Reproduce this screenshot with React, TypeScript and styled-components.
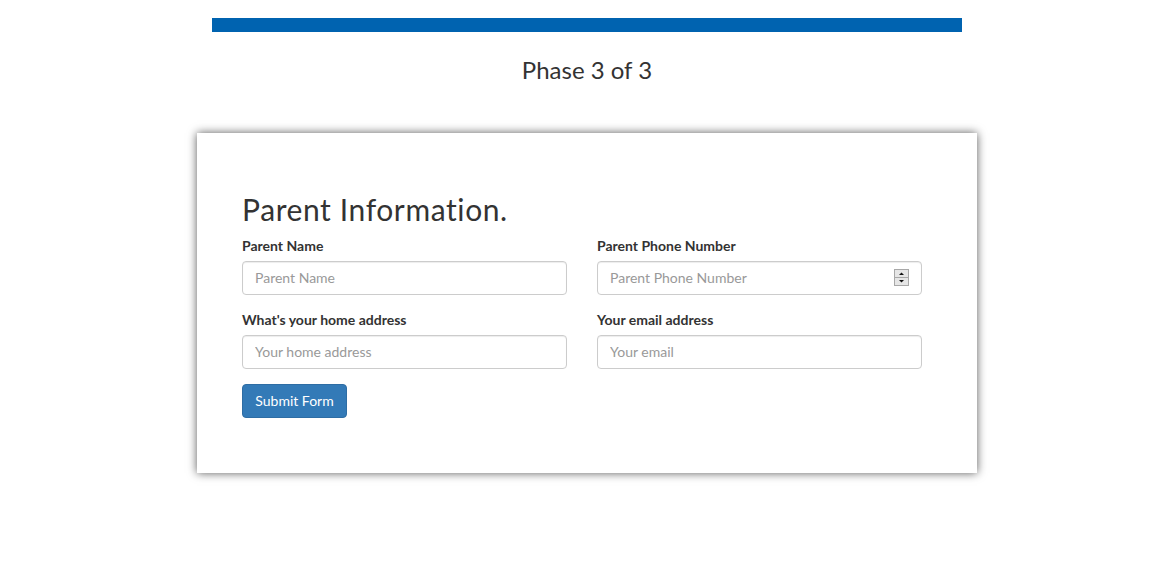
import React from "react";
import styled, { createGlobalStyle } from "styled-components";

const Global = createGlobalStyle`
  html, body { margin: 0; padding: 0; background: #fff; }
  body { font-family: "Lato", "DejaVu Sans", sans-serif; color: #333; }
  * { box-sizing: border-box; }
`;

const Page = styled.div`
  display: flex;
  flex-direction: column;
  align-items: center;
  padding: 18px 0 99px 6px;
`;

const ProgressBar = styled.div`
  width: 750px;
  height: 14px;
  background: #0063b0;
`;

const Phase = styled.h4`
  margin: 23px 0 0;
  font-size: 24px;
  line-height: 30px;
  font-weight: 400;
  color: #333;
`;

const Card = styled.div`
  margin-top: 48px;
  width: 780px;
  height: 340px;
  background: #fff;
  box-shadow: 0 0 9px rgba(0, 0, 0, 0.65);
  padding: 56px 55px 0 45px;
`;

const Title = styled.h2`
  margin: 0 0 7px;
  font-size: 30px;
  line-height: 40px;
  font-weight: 400;
  letter-spacing: 0.6px;
  color: #333;
`;

const Grid = styled.div`
  display: grid;
  grid-template-columns: 325px 325px;
  column-gap: 30px;
  row-gap: 15px;
`;

const Field = styled.div`
  display: flex;
  flex-direction: column;
`;

const Label = styled.label`
  font-size: 14px;
  font-weight: 700;
  line-height: 20px;
  margin-bottom: 5px;
  color: #333;
`;

const InputWrap = styled.div`
  position: relative;
`;

const Input = styled.input`
  width: 100%;
  height: 34px;
  padding: 6px 12px 7px;
  font-family: "Lato", "DejaVu Sans", sans-serif;
  font-size: 14px;
  color: #555;
  border: 1px solid #ccc;
  border-radius: 4px;
  box-shadow: inset 0 1px 1px rgba(0, 0, 0, 0.075);
  outline: none;
  &::placeholder { color: #999; }
`;

const Spinner = styled.svg`
  position: absolute;
  right: 13px;
  top: 8px;
`;

const Submit = styled.button`
  margin-top: 15px;
  width: 105px;
  height: 34px;
  font-family: "Lato", "DejaVu Sans", sans-serif;
  font-size: 14px;
  color: #fff;
  background: #337ab7;
  border: 1px solid #2e6da4;
  border-radius: 4px;
  padding: 0 0 1px;
`;

export default function App() {
  return (
    <>
      <Global />
      <Page>
        <ProgressBar />
        <Phase>Phase 3 of 3</Phase>
        <Card>
          <Title>Parent Information.</Title>
          <Grid>
            <Field>
              <Label>Parent Name</Label>
              <Input placeholder="Parent Name" />
            </Field>
            <Field>
              <Label>Parent Phone Number</Label>
              <InputWrap>
                <Input placeholder="Parent Phone Number" />
                <Spinner width="15" height="17" viewBox="0 0 15 17">
                  <rect x="0.5" y="0.5" width="14" height="16" fill="#e6e6e6" stroke="#a8a8a8" />
                  <line x1="1" y1="8.5" x2="14" y2="8.5" stroke="#a8a8a8" />
                  <path d="M5 6 L7.5 3.5 L10 6 Z" fill="#111" />
                  <path d="M5 11 L10 11 L7.5 13.5 Z" fill="#111" />
                </Spinner>
              </InputWrap>
            </Field>
            <Field>
              <Label>What's your home address</Label>
              <Input placeholder="Your home address" />
            </Field>
            <Field>
              <Label>Your email address</Label>
              <Input placeholder="Your email" />
            </Field>
          </Grid>
          <Submit>Submit Form</Submit>
        </Card>
      </Page>
    </>
  );
}
